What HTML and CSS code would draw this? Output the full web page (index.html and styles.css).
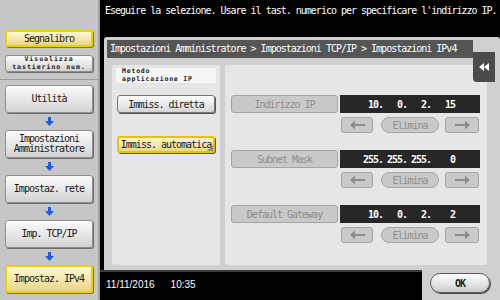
FILE: index.html
```html
<!DOCTYPE html>
<html lang="it">
<head>
    <meta charset="UTF-8">
    <title>Impostazioni IPv4</title>
    <link rel="stylesheet" href="styles.css">
</head>
<body>
    <aside class="sidebar">
        <div class="side-top">
            <button class="side-btn yellow">Segnalibro</button>
            <button class="side-btn tiny">Visualizza<br>tastierino num.</button>
        </div>
        <nav class="crumbs">
            <button class="side-btn">Utilità</button>
            <span class="down"><svg width="9" height="9" viewBox="0 0 9 9"><path d="M3 0h3v4h3L4.5 9 0 4h3z"/></svg></span>
            <button class="side-btn">Impostazioni<br>Amministratore</button>
            <span class="down"><svg width="9" height="9" viewBox="0 0 9 9"><path d="M3 0h3v4h3L4.5 9 0 4h3z"/></svg></span>
            <button class="side-btn">Impostaz. rete</button>
            <span class="down"><svg width="9" height="9" viewBox="0 0 9 9"><path d="M3 0h3v4h3L4.5 9 0 4h3z"/></svg></span>
            <button class="side-btn">Imp. TCP/IP</button>
            <span class="down"><svg width="9" height="9" viewBox="0 0 9 9"><path d="M3 0h3v4h3L4.5 9 0 4h3z"/></svg></span>
            <button class="side-btn yellow">Impostaz. IPv4</button>
        </nav>
    </aside>

    <main class="main">
        <p class="prompt">Eseguire la selezione. Usare il tast. numerico per specificare l'indirizzo IP.</p>

        <section class="panel">
            <div class="panel-title">Impostazioni Amministratore &gt; Impostazioni TCP/IP &gt; Impostazioni IPv4</div>
            <button class="collapse"><svg width="10" height="8" viewBox="0 0 10 8"><path d="M5 0v8L0 4zM10 0v8L5 4z"/></svg></button>

            <div class="panel-body">
                <div class="method">
                    <div class="method-label">Metodo<br>applicazione IP</div>
                    <button class="pick">Immiss. diretta</button>
                    <button class="pick on">Immiss. automatica</button>
                </div>

                <div class="fields">
                    <div class="field">
                        <div class="field-row">
                            <span class="dim field-name">Indirizzo IP</span>
                            <span class="ip"><i>10.</i><i>0.</i><i>2.</i><i>15</i></span>
                        </div>
                        <div class="field-keys">
                            <span class="dim key back"><svg width="15" height="10" viewBox="0 0 15 10"><path d="M0 5l5-4.5v3.5h10v2H5v3.5z"/></svg></span>
                            <span class="dim pill">Elimina</span>
                            <span class="dim key fwd"><svg width="15" height="10" viewBox="0 0 15 10"><path d="M15 5l-5-4.5v3.5H0v2h10v3.5z"/></svg></span>
                        </div>
                    </div>
                    <div class="field">
                        <div class="field-row">
                            <span class="dim field-name">Subnet Mask</span>
                            <span class="ip"><i>255.</i><i>255.</i><i>255.</i><i>0</i></span>
                        </div>
                        <div class="field-keys">
                            <span class="dim key back"><svg width="15" height="10" viewBox="0 0 15 10"><path d="M0 5l5-4.5v3.5h10v2H5v3.5z"/></svg></span>
                            <span class="dim pill">Elimina</span>
                            <span class="dim key fwd"><svg width="15" height="10" viewBox="0 0 15 10"><path d="M15 5l-5-4.5v3.5H0v2h10v3.5z"/></svg></span>
                        </div>
                    </div>
                    <div class="field">
                        <div class="field-row">
                            <span class="dim field-name">Default Gateway</span>
                            <span class="ip"><i>10.</i><i>0.</i><i>2.</i><i>2</i></span>
                        </div>
                        <div class="field-keys">
                            <span class="dim key back"><svg width="15" height="10" viewBox="0 0 15 10"><path d="M0 5l5-4.5v3.5h10v2H5v3.5z"/></svg></span>
                            <span class="dim pill">Elimina</span>
                            <span class="dim key fwd"><svg width="15" height="10" viewBox="0 0 15 10"><path d="M15 5l-5-4.5v3.5H0v2h10v3.5z"/></svg></span>
                        </div>
                    </div>
                </div>
            </div>
        </section>

        <footer class="status">
            <span class="clock">11/11/2016<span>10:35</span></span>
            <div class="ok-box"><button class="ok">OK</button></div>
        </footer>
    </main>
</body>
</html>
```

FILE: styles.css
```css
* {
    box-sizing: border-box;
}
body {
    margin: 0;
    width: 500px;
    height: 300px;
    overflow: hidden;
    display: flex;
    background: #000;
    color: #1a1a1a;
    font-family: "DejaVu Sans Mono", monospace;
    font-size: 10px;
    letter-spacing: -1px;
}
button {
    font: inherit;
    letter-spacing: inherit;
    color: inherit;
    padding: 0;
}

/* left column */

.sidebar {
    width: 100px;
    flex: none;
    background: #c6c6c6;
    border-right: 2px solid #a4a4a4;
}
.side-top {
    display: flex;
    flex-direction: column;
    gap: 8px;
    padding: 30px 0 7px 5px;
    border-bottom: 1px solid #9a9a9a;
}
.side-btn {
    width: 88px;
    height: 28px;
    border: 1px solid #8e8e8e;
    border-radius: 3px;
    background: linear-gradient(#fbfbfb, #e4e4e4 60%, #d2d2d2);
    box-shadow: 1px 1px 0 #6e6e6e;
    line-height: 10px;
}
.side-top .side-btn {
    height: 17px;
}
.side-btn.tiny {
    font-size: 6.5px;
    font-weight: bold;
    line-height: 7.5px;
    letter-spacing: 1px;
}
.side-btn.yellow {
    border: 2px solid #ecd000;
    background: linear-gradient(#fff8d6, #f4e4a4 60%, #e8d389);
    box-shadow: 1px 1px 0 #7d7040;
}
.crumbs {
    display: flex;
    flex-direction: column;
    padding: 5px 0 0 5px;
}
.down {
    width: 88px;
    height: 17px;
    display: flex;
    align-items: center;
    justify-content: center;
}
.down svg {
    fill: #1f5ce6;
}

/* main area */

.main {
    width: 400px;
    display: flex;
    flex-direction: column;
}
.prompt {
    height: 37px;
    margin: 0;
    padding: 5px 0 0 5px;
    color: #fff;
    line-height: 11px;
    white-space: nowrap;
}
.panel {
    position: relative;
    height: 233px;
    margin-left: 4px;
    padding: 3px 13px 5px 8px;
    background: #d0d0d0;
    border-radius: 3px 3px 0 0;
}
.panel-title {
    height: 18px;
    margin: 0 14px 0 -5px;
    padding-left: 3px;
    background: #555;
    color: #fff;
    line-height: 18px;
    white-space: nowrap;
}
.collapse {
    position: absolute;
    top: 15px;
    right: 5px;
    width: 22px;
    height: 30px;
    border: 0;
    border-radius: 0 0 0 4px;
    background: #4b4b4b;
    display: flex;
    align-items: center;
    justify-content: center;
}
.collapse svg {
    fill: #fff;
}
.panel-body {
    display: flex;
    gap: 5px;
    height: 200px;
    margin-top: 7px;
}

.method {
    width: 108px;
    display: flex;
    flex-direction: column;
    align-items: center;
    padding: 3px;
    background: #e6e6e6;
    border-radius: 2px;
}
.method-label {
    width: 100px;
    height: 15px;
    padding-left: 6px;
    background: #f6f6f6;
    font-size: 6.5px;
    font-weight: bold;
    line-height: 7.5px;
    letter-spacing: 0.8px;
}
.pick {
    width: 98px;
    height: 18px;
    margin-top: 12px;
    border: 1px solid #777;
    border-radius: 3px;
    background: linear-gradient(#fdfdfd, #e6e6e6 60%, #d4d4d4);
    box-shadow: 1px 1px 0 #555;
}
.pick.on {
    position: relative;
    height: 17px;
    margin-top: 23px;
    border: 2px solid #e6c400;
    background: linear-gradient(#fff7cf, #f5e4a2 60%, #ebd68b);
}
.pick.on::after {
    content: '';
    position: absolute;
    right: 0;
    bottom: 0;
    border: 3px solid transparent;
    border-right-color: #8a8a8a;
    border-bottom-color: #8a8a8a;
}

.fields {
    flex: 1;
    padding: 30px 7px 0 6px;
    background: #e6e6e6;
    border-radius: 2px;
}
.field + .field {
    margin-top: 17px;
}
.field-row {
    display: flex;
    gap: 2px;
    height: 18px;
}
.dim {
    display: flex;
    align-items: center;
    justify-content: center;
    background: #c9c9c9;
    border: 1px solid #a5a5a5;
    border-radius: 3px;
    color: #8e8e8e;
}
.field-name {
    width: 107px;
}
.ip {
    width: 140px;
    display: flex;
    align-items: center;
    padding-left: 19px;
    background: #272727;
    color: #fff;
    font-weight: bold;
}
.ip i {
    width: 24px;
    font-style: normal;
    text-align: right;
}
.field-keys {
    display: flex;
    height: 16px;
    margin: 4px 0 0 110px;
}
.key svg {
    fill: #8c8c8c;
}
.key.back {
    width: 32px;
}
.key.fwd {
    width: 34px;
}
.pill {
    width: 58px;
    margin: 0 6px 0 8px;
    border-radius: 8px;
}

/* bottom bar */

.status {
    display: flex;
    height: 30px;
}
.clock {
    flex: 1;
    padding-left: 6px;
    border-top: 2px solid #3c3c3c;
    color: #fff;
    font-family: "Liberation Sans", Arial, sans-serif;
    font-size: 10px;
    letter-spacing: 0;
    line-height: 26px;
}
.clock span {
    margin-left: 16px;
}
.ok-box {
    width: 78px;
    padding: 3px 0 0 8px;
    background: #d0d0d0;
}
.ok {
    width: 60px;
    height: 20px;
    border: 1px solid #5a5a5a;
    border-radius: 10px;
    background: linear-gradient(#fdfdfd, #e2e2e2 60%, #c9c9c9);
    box-shadow: 1px 1px 0 #444;
    font-weight: bold;
}
```
